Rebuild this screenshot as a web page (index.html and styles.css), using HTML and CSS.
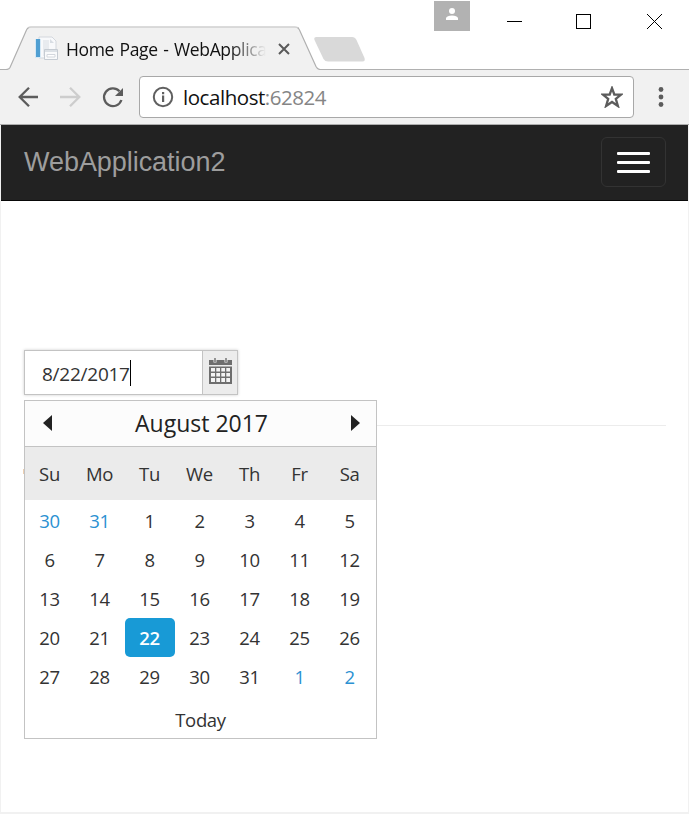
FILE: index.html
```html
<!DOCTYPE html>
<html lang="en">
<head>
<meta charset="utf-8">
<title>Home Page - WebApplication2</title>
<link rel="stylesheet" href="styles.css">
</head>
<body>
<div class="window">
  <header class="tabstrip">
    <svg class="tab-shape" width="689" height="70" viewBox="0 0 689 70">
      <path d="M0 69.5H6Q9 69.5 10 67.500L26.500 30Q28 27 31 27H295Q298 27 299.500 30L316 66.500Q317.500 69.500 320 69.500H689V70H0Z" fill="#f1f1f1"/>
      <path d="M28 28Q29 27 31 27H295Q297.500 27 298.500 28.500" fill="none" stroke="#cfcfcf" stroke-width="1.400"/>
      <path d="M0 69.500H6Q9 69.500 10 67.500L26.500 30Q27.200 28.500 28.500 27.700M298 27.700L299.500 30L316 66.500Q317.500 69.500 320 69.500H689" fill="none" stroke="#b0b0b0" stroke-width="1.200"/>
      <path d="M316.500 37H352Q355 37 356.500 40L364.500 58Q365.500 61.500 362.500 61.500H328Q325 61.500 323.500 59L314.500 40Q313.500 37 316.500 37Z" fill="#d9d9d9"/>
    </svg>
    <div class="tab">
      <svg class="favicon" width="25" height="26" viewBox="0 0 25 26">
        <path d="M5 1H18L22 5V22H5Z" fill="#f8f9fb" stroke="#d3d7dd"/>
        <path d="M1 3H7V22H1Z" fill="#d5e8f5"/>
        <path d="M2 3H6V21H2Z" fill="#509fd2"/>
        <path d="M9 4H15V20H9Z" fill="#e8ebef"/>
        <path d="M16 3L20 7H16Z" fill="#d8dde3"/>
        <path d="M10.500 13.500H23.500V23.500H10.500Z" fill="#f9fafb" stroke="#c5cbd2"/>
        <path d="M11 14H23V16H11Z" fill="#dce1e6"/><path d="M13 18.500H21V21H13Z" fill="#fff" stroke="#d3d7dd"/>
      </svg>
      <span class="tab-title">Home Page - WebApplication2</span>
      <svg class="tab-close" width="12" height="12" viewBox="0 0 12 12"><path d="M1 1L11 11M11 1L1 11" stroke="#5a5a5a" stroke-width="2"/></svg>
    </div>
    <div class="controls">
      <span class="profile"><svg width="12" height="13" viewBox="0 0 12 13"><circle cx="6" cy="3" r="3" fill="#fff"/><path d="M0 12V10Q1 7.500 6 7.500T12 10V12Z" fill="#fff"/></svg></span>
      <svg class="win-icons" width="158" height="18" viewBox="0 0 158 18" fill="none" stroke="#000" shape-rendering="crispEdges"><path d="M0 8.500H15M69.500 1.500H83.500V15.500H69.500ZM140 1L155 16M155 1L140 16"/></svg>
    </div>
  </header>
  <div class="toolbar">
    <svg class="nav-icons" width="110" height="24" viewBox="0 0 110 24" fill="none" stroke="#5c5c5c" stroke-width="2.300">
      <path d="M21 12H3M12 2.700L2.700 12L12 21.300"/>
      <path stroke="#cdcdcd" d="M43 12H61.500M53 2.700L62.300 12L53 21.300"/>
      <path d="M102.500 6.200A8.900 8.900 0 1 0 104.400 15"/><path d="M106 3V11H98Z" fill="#5c5c5c" stroke="none"/>
    </svg>
    <div class="omnibox">
      <svg width="22" height="22" viewBox="0 0 22 22"><circle cx="11" cy="11" r="9.200" fill="none" stroke="#606060" stroke-width="2"/><path d="M10 9.500H12.200V16H10ZM10 6H12.200V8.200H10Z" fill="#606060"/></svg>
      <span class="url">localhost<span class="port">:62824</span></span>
      <svg class="star" width="22" height="22" viewBox="0 0 22 22"><path d="M11 2.200L13.300 8.500L20 8.700L14.800 12.900L16.900 20L11 16L5.100 20L7.200 12.900L2 8.700L8.700 8.500Z" fill="none" stroke="#5c5c5c" stroke-width="2.300"/></svg>
    </div>
    <svg class="menu" width="6" height="20" viewBox="0 0 6 20" fill="#5c5c5c"><circle cx="3" cy="2.500" r="2.400"/><circle cx="3" cy="10" r="2.400"/><circle cx="3" cy="17.500" r="2.400"/></svg>
  </div>
  <main class="page">
    <nav class="navbar">
      <span class="brand">WebApplication2</span>
      <button class="toggle" aria-label="Menu"><i></i><i></i><i></i></button>
    </nav>
    <div class="content">
      <div class="picker">
        <span class="value">8/22/2017</span><span class="caret"></span>
        <span class="picker-button"><svg width="23" height="26" viewBox="0 0 23 26"><path d="M0 2H23V7H0Z" fill="#6e6e6e"/><path d="M4.500 0H7.500V4.500H4.500ZM15.500 0H18.500V4.500H15.500Z" fill="#ececec"/><path d="M5.300 0H6.700V4H5.300ZM16.300 0H17.700V4H16.300Z" fill="#6e6e6e"/><path d="M0 8.500H23V26H0Z" fill="#6e6e6e"/><path d="M2 10H6V13.500H2ZM7.300 10H11V13.500H7.300ZM12.300 10H16V13.500H12.300ZM17.300 10H21V13.500H17.300ZM2 15H6V18.500H2ZM7.300 15H11V18.500H7.300ZM12.300 15H16V18.500H12.300ZM17.300 15H21V18.500H17.300ZM2 20H6V24H2ZM7.300 20H11V24H7.300ZM12.300 20H16V24H12.300ZM17.300 20H21V24H17.300Z" fill="#f3f3f3"/></svg></span>
      </div>
      <div class="below">
        <section class="calendar">
          <div class="cal-head">
            <svg width="9" height="16" viewBox="0 0 9 16"><path d="M9 0V16L0 8Z" fill="#222"/></svg>
            <span class="month">August 2017</span>
            <svg width="9" height="16" viewBox="0 0 9 16"><path d="M0 0V16L9 8Z" fill="#222"/></svg>
          </div>
          <div class="week days"><span>Su</span><span>Mo</span><span>Tu</span><span>We</span><span>Th</span><span>Fr</span><span>Sa</span></div>
          <div class="dates">
            <div class="week"><span class="other">30</span><span class="other">31</span><span>1</span><span>2</span><span>3</span><span>4</span><span>5</span></div>
            <div class="week"><span>6</span><span>7</span><span>8</span><span>9</span><span>10</span><span>11</span><span>12</span></div>
            <div class="week"><span>13</span><span>14</span><span>15</span><span>16</span><span>17</span><span>18</span><span>19</span></div>
            <div class="week"><span>20</span><span>21</span><span class="selected">22</span><span>23</span><span>24</span><span>25</span><span>26</span></div>
            <div class="week"><span>27</span><span>28</span><span>29</span><span>30</span><span>31</span><span class="other">1</span><span class="other">2</span></div>
          </div>
          <div class="today">Today</div>
        </section>
        <div class="rule"></div>
      </div>
    </div>
  </main>
</div>
</body>
</html>
```

FILE: styles.css
```css
* { box-sizing: border-box; }
body { margin: 0; background: #fff; font-family: "Open Sans", "Noto Sans", sans-serif; color: #333; }
svg { display: block; flex: none; }
.window { width: 689px; height: 814px; display: flex; flex-direction: column; overflow: hidden; }

.tabstrip { position: relative; height: 70px; flex: none; display: flex; justify-content: space-between; }
.tab-shape { position: absolute; left: 0; top: 0; }
.tab { position: relative; display: flex; align-items: center; padding: 27px 0 0 34px; height: 70px; }
.tab-title { width: 200px; margin-left: 7px; overflow: hidden; white-space: nowrap; font-size: 17.5px; letter-spacing: -0.35px; word-spacing: 1.3px; color: #111;
  -webkit-mask-image: linear-gradient(90deg, #000 164px, transparent 200px); mask-image: linear-gradient(90deg, #000 164px, transparent 200px); }
.tab-close { margin-left: 12px; }
.controls { position: relative; display: flex; align-items: flex-start; padding-right: 24px; width: 255px; }
.profile { width: 36px; height: 30px; margin-top: 1px; background: #b2b2b2; display: flex; justify-content: center; padding-top: 7px; }
.win-icons { margin: 13px 0 0 37px; }

.toolbar { height: 55px; flex: none; display: flex; align-items: center; background: #f1f1f1; border-bottom: 1px solid #adadad; padding-left: 17px; }
.omnibox { width: 495px; height: 42px; margin-left: 12px; display: flex; align-items: center; background: #fff; border: 1px solid #a8a8a8; border-radius: 4px; padding: 0 10px 0 12px; }
.url { margin-left: 9px; flex: 1; font-size: 20.5px; letter-spacing: -0.45px; color: #111; line-height: 30px; }
.port { color: #858585; }
.menu { margin-left: 24px; }

.page { flex: 1; border: solid #f1f1f1; border-width: 0 1px 2px; background: #fff; }
.navbar { height: 76px; display: flex; align-items: flex-start; justify-content: space-between; padding: 12px 22px 0 23px; background: #222; border-bottom: 1px solid #080808; }
.brand { font: 27px/50px "Liberation Sans", sans-serif; letter-spacing: -0.05px; color: #9d9d9d; }
.toggle { width: 65px; height: 50px; padding: 0; display: flex; flex-direction: column; align-items: center; justify-content: center; gap: 6px; background: transparent; border: 1px solid #333; border-radius: 6px; }
.toggle i { width: 33px; height: 3px; border-radius: 1px; background: #fff; }

.content { padding: 149px 22px 0 23px; }
.picker { width: 214px; height: 45px; display: flex; align-items: center; border: 1px solid #c3c3c3; box-shadow: 0 0 3px rgba(0,0,0,.2); padding-left: 17px; }
.value { width: 88px; font-size: 19px; letter-spacing: -0.25px; white-space: nowrap; line-height: 26px; padding-top: 2px; }
.caret { width: 1px; height: 26px; background: #000; }
.picker-button { width: 36px; height: 43px; margin-left: auto; background: #ececec; border-left: 1px solid #c3c3c3; display: flex; justify-content: center; padding-top: 7px; }
.picker .picker-button { width: 35px; }
.below { display: flex; align-items: flex-start; margin-top: 5px; }
.calendar { position: relative; width: 353px; height: 339px; border: 1px solid #c3c3c3; font-size: 18.5px; letter-spacing: -0.35px; }
.calendar::before { content: ""; position: absolute; left: -2px; top: 68px; width: 1px; height: 5px; background: #eccfb1; }
.rule { flex: 1; height: 1px; margin-top: 25px; background: #ececec; }
.cal-head { height: 46px; display: flex; align-items: center; justify-content: space-between; padding: 0 16px 2px 18px; background: #fcfcfc; border-bottom: 1px solid #c3c3c3; }
.month { font-size: 23px; letter-spacing: 0; color: #222; }
.week { display: grid; grid-template-columns: repeat(7, 50px); height: 39px; text-align: center; line-height: 39px; }
.week span { padding-right: 1px; }
.week.days { height: 53px; line-height: 53px; background: #ebebeb; }
.dates { padding-top: 1px; }
.week .other { color: #2b91d2; }
.week .selected { background: #189ad6; border-radius: 5px; color: #fff; font-weight: 600; }
.today { height: 42px; line-height: 48px; text-align: center; }
```
